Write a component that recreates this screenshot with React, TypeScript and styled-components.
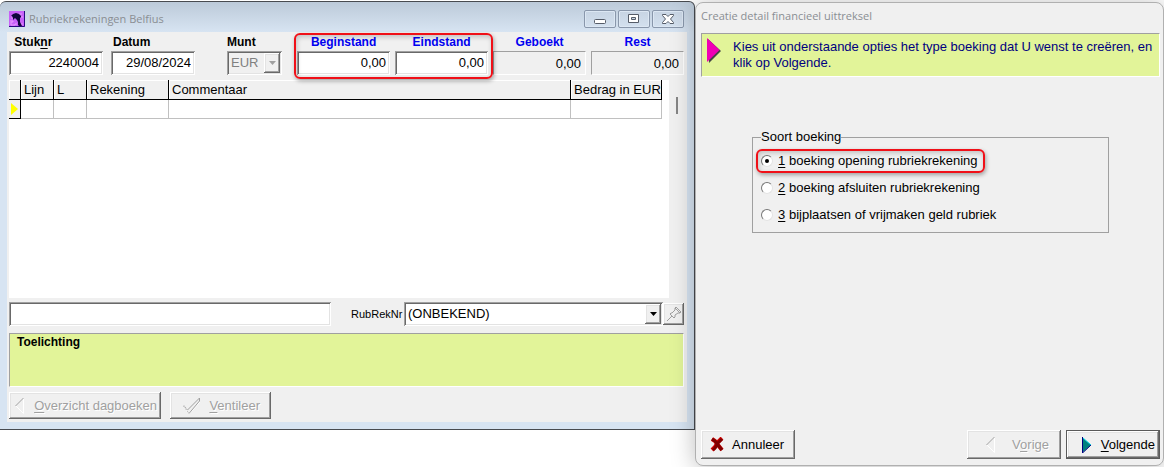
import React from "react";
import styled, { createGlobalStyle, css } from "styled-components";

const GlobalStyle = createGlobalStyle`
  *, *::before, *::after { box-sizing: border-box; }
  body {
    margin: 0;
    background: #fff;
    color: #000;
    font: 13px/16px "Liberation Sans", Arial, sans-serif;
  }
  button, input, select { font: inherit; color: inherit; margin: 0; border-radius: 0; }
  u { text-underline-offset: 2px; }
`;

const sunken = css`
  border: 0;
  box-shadow: inset 1px 1px #a0a0a0, inset -1px -1px #fff, inset 2px 2px #696969, inset -2px -2px #e3e3e3;
`;
const etched = css`
  border: 1px solid;
  border-color: #a0a0a0 #fff #fff #a0a0a0;
`;
const raised = css`
  border: 0;
  box-shadow: inset -1px -1px #696969, inset 1px 1px #fff, inset -2px -2px #a0a0a0, inset 2px 2px #e3e3e3;
`;

const Desktop = styled.main`
  display: flex;
  align-items: flex-start;
  min-height: 100vh;
  overflow: hidden;
`;

const LedgerWindow = styled.section`
  flex: 695 1 0;
  min-width: 0;
  margin-top: 1px;
  padding: 0 7px 7px;
  border: solid #484b50;
  border-width: 1px 1px 1px 0;
  border-radius: 6px 6px 0 0;
  background: #d7e4f2 linear-gradient(#bccad9, #d7e4f2) top / 100% 30px no-repeat;
`;

const TitleBar = styled.header`
  display: flex;
  align-items: center;
  gap: 4px;
  height: 30px;
  padding: 4px 3px 0 2px;
`;

const Title = styled.h1`
  flex: 1;
  margin: 0;
  color: #8a8e93;
  font: 11px/16px "Open Sans", "Noto Sans", sans-serif;
  white-space: nowrap;
`;

const WindowButtons = styled.div`
  display: flex;
  gap: 2px;
`;

const WindowButton = styled.button`
  display: grid;
  place-items: center;
  width: 32px;
  height: 18px;
  padding: 0;
  border: 1px solid #8997ab;
  border-radius: 2px;
  background: linear-gradient(#c7d4e3, #d3e0ee);
  box-shadow: inset 0 0 0 1px #dce7f3;
`;

const Client = styled.div`
  padding: 2px 3px 3px 2px;
  background: #f0f0f0;
`;

const FieldRow = styled.div`
  display: flex;
  justify-content: space-between;
`;

const FieldGroup = styled.div<{ $gap: number }>`
  position: relative;
  display: flex;
  gap: ${(p) => p.$gap}px;
`;

const Field = styled.div<{ $width: number }>`
  display: flex;
  flex-direction: column;
  gap: 1px;
  width: ${(p) => p.$width}px;
`;

const CurrencyField = styled(Field)`
  margin-left: 17px;
`;

const FieldLabel = styled.label<{ $align?: "left" | "center"; $blue?: boolean }>`
  padding: 0 ${(p) => (p.$align === "center" ? 0 : 2)}px;
  text-align: ${(p) => p.$align ?? "left"};
  color: ${(p) => (p.$blue ? "#0000f0" : "#000")};
  font-size: 12px;
  font-weight: bold;
`;

const CurrencyLabel = styled(FieldLabel)`
  padding: 0;
`;

const TextInput = styled.input<{ $flat?: boolean }>`
  width: 100%;
  height: 24px;
  padding: 0 4px 2px;
  text-align: right;
  background: #fff;
  ${sunken}
  ${(p) => p.$flat && css`
    ${etched}
    padding-bottom: 0;
    background: #f0f0f0;
    box-shadow: none;
  `}
`;

const SelectFrame = styled.div<{ $disabled?: boolean }>`
  position: relative;
  flex: 1;
  height: 24px;
  background: ${(p) => (p.$disabled ? "#f0f0f0" : "#fff")};
  ${sunken}
`;

const Select = styled.select`
  display: block;
  width: 100%;
  height: 24px;
  padding: 0 20px 0 4px;
  border: 0;
  background: transparent;
  appearance: none;
  &:disabled { color: #808080; opacity: 1; }
`;

const DropArrow = styled.span`
  position: absolute;
  top: 2px;
  right: 2px;
  display: grid;
  place-items: center;
  width: 16px;
  height: 20px;
  background: #f0f0f0;
  pointer-events: none;
  ${raised}
`;

const Highlight = styled.div`
  position: absolute;
  border: 2px solid #f01018;
  border-radius: 6px;
  box-shadow: 1px 2px 4px #0005, inset 1px 2px 5px #0003;
  pointer-events: none;
`;

const FieldHighlight = styled(Highlight)`
  inset: -1px -5px -4px -3px;
`;

const OptionHighlight = styled(Highlight)`
  inset: -4px -7px -4px -5px;
`;

const GridArea = styled.div`
  display: flex;
  margin-top: 5px;
`;

const GridPane = styled.div`
  flex: 1;
  min-height: 218px;
  padding-right: 7px;
  background: #fff;
`;

const GridScroll = styled.div`
  width: 15px;
  padding: 17px 7px 0;
  &::before {
    content: "";
    display: block;
    width: 2px;
    height: 17px;
    background: #858585;
  }
`;

const Table = styled.table`
  width: 100%;
  border-collapse: separate;
  border-spacing: 0;
  table-layout: fixed;
`;

const HeadCell = styled.th<{ $width?: number }>`
  width: ${(p) => (p.$width ? `${p.$width}px` : "auto")};
  height: 20px;
  padding: 0 0 0 3px;
  border: solid #000;
  border-width: 0 1px 1px 0;
  background: #f0f0f0;
  box-shadow: inset 1px 1px #fff;
  text-align: left;
  font-weight: normal;
  white-space: nowrap;
`;

const Cell = styled.td`
  height: 19px;
  padding: 0;
  border: solid #c0c0c0;
  border-width: 0 1px 1px 0;
`;

const MarkerCell = styled(Cell)`
  border-color: #000;
  background: #f0f0f0;
  svg { display: block; margin-left: 2px; }
`;

const AccountRow = styled.div`
  display: flex;
  align-items: center;
  margin-top: 4px;
`;

const Search = styled(TextInput)`
  flex: 314 1 0;
  min-width: 0;
  text-align: left;
`;

const AccountPicker = styled.div`
  display: flex;
  align-items: center;
  flex: 333 1 0;
  margin-left: 20px;
`;

const SmallLabel = styled.label`
  width: 53px;
  font-size: 11px;
`;

const PinButton = styled.button`
  display: grid;
  place-items: center;
  width: 21px;
  height: 22px;
  padding: 0;
  background: #f0f0f0;
  ${raised}
`;

const Notes = styled.section`
  min-height: 54px;
  margin-top: 7px;
  padding: 0 7px;
  background: #e2f499;
  ${etched}
`;

const NotesTitle = styled.h2`
  margin: 0;
  font-size: 12px;
  line-height: 16px;
`;

const Actions = styled.div<{ $gap: number }>`
  display: flex;
  gap: ${(p) => p.$gap}px;
`;

const LedgerActions = styled(Actions)`
  margin-top: 5px;
`;

const PushButton = styled.button<{ $width: number; $height: number; $default?: boolean }>`
  display: flex;
  align-items: center;
  justify-content: flex-end;
  gap: 9px;
  width: ${(p) => p.$width}px;
  height: ${(p) => p.$height}px;
  padding: 0 4px;
  background: #f0f0f0;
  white-space: nowrap;
  ${raised}
  ${(p) => p.$default && css`
    border: 1px solid #5a5a5a;
  `}
  &:disabled { color: #a0a0a0; text-shadow: 1px 1px #fff; }
`;

const LooseButton = styled(PushButton)`
  padding-right: 11px;
  gap: 8px;
`;

const WideButton = styled(LooseButton)`
  padding-right: 12px;
  gap: 16px;
`;

const DialogWindow = styled.section`
  position: relative;
  display: flex;
  flex-direction: column;
  flex: 469 1 0;
  min-width: 0;
  min-height: calc(100vh - 3px);
  margin-top: 2px;
  padding: 0 3px 6px 5px;
  border: 1px solid #b0b0b0;
  border-radius: 8px;
  background: #f0f0f0;
  box-shadow: 0 2px 24px #0004;
`;

const DialogTitle = styled(Title)`
  flex: none;
  padding: 5px 0 9px;
`;

const Banner = styled.p`
  display: flex;
  gap: 12px;
  min-height: 44px;
  margin: 0;
  padding: 4px 4px 4px 5px;
  background: #e2f499;
  color: #000080;
  ${etched}
  svg { flex: none; }
`;

const BannerText = styled.span`
  padding-top: 1px;
`;

const Options = styled.fieldset`
  position: relative;
  display: flex;
  flex-direction: column;
  align-items: flex-start;
  gap: 11px;
  margin: 52px 51px 0;
  padding: 8px 8px 9px;
  border: 1px solid #a0a0a0;
`;

const Legend = styled.legend`
  padding: 0;
`;

const Option = styled.label`
  position: relative;
  display: flex;
  align-items: center;
  gap: 5px;
`;

const Radio = styled.input`
  display: grid;
  place-items: center;
  width: 12px;
  height: 12px;
  margin: 0;
  border: 1px solid;
  border-color: #777 #e3e3e3 #e3e3e3 #777;
  border-radius: 50%;
  background: #fff;
  appearance: none;
  &:checked::before {
    content: "";
    width: 4px;
    height: 4px;
    border-radius: 50%;
    background: #000;
  }
`;

const DialogActions = styled.footer`
  display: flex;
  justify-content: space-between;
  margin-top: auto;
`;

const Dolphin = () => (
  <svg width="16" height="16" viewBox="0 0 16 16" aria-hidden="true">
    <path d="M0 0h16v16H0z" fill="#c860f8" />
    <path d="M1 10h3v1H2v3h4v-1h2M12 13h2M12 6h2M10 3h3M2 7h2" fill="none" stroke="#e898ff" />
    <path d="M0 5h2l2-2 3-1 3 1 2 2v1l-1 1v4l1 2 1 2h-3l-1-1v-3L8 9 6 7 4 9V7L3 5z" fill="#10063c" />
    <path d="M15.500 0v15.500H0" fill="none" stroke="#2a0a80" />
  </svg>
);

const ArrowDown = ({ color }: { color: string }) => (
  <svg width="7" height="4" viewBox="0 0 7 4" aria-hidden="true">
    <path d="M0 0h7L3.500 4z" fill={color} />
  </svg>
);

const BackIcon = () => (
  <svg width="10" height="18" viewBox="0 0 10 18" aria-hidden="true" fill="none">
    <path d="M8.500 1v15.500L1 9" stroke="#fff" />
    <path d="M8.500 1L.5 9" stroke="#a0a0a0" />
  </svg>
);

const DoubleCheckIcon = () => (
  <svg width="18" height="18" viewBox="0 0 18 18" aria-hidden="true" fill="none">
    <path d="M1 10l5 7L17 5" stroke="#fff" />
    <path d="M4.500 13L16.500 1v3L6 16.500" stroke="#a0a0a0" />
    <path d="M.5 9l5.500 7.500M1 8.500l3.500 4.500" stroke="#a0a0a0" strokeDasharray="1 1" />
  </svg>
);

const PinIcon = () => (
  <svg width="15" height="15" viewBox="0 0 15 15" aria-hidden="true" fill="none" stroke="#a0a0a0">
    <path d="M1 14l5-5M4 7l4 4 1-1V8l3-2h2l-5-5v2L6 6H5zM9 1l1-1 5 5-1 1" />
  </svg>
);

const CrossIcon = () => (
  <svg width="14" height="15" viewBox="0 0 14 15" aria-hidden="true" fill="none">
    <path d="M2 2l3 2 3 4 4 5M12 1L8 5l-3 5-3 3" stroke="#d00000" strokeWidth="4" />
    <path d="M2 2l3 2 3 4 4 5M12 2L8 6l-3 5-2 2" stroke="#800000" strokeWidth="3" />
  </svg>
);

const NextIcon = () => (
  <svg width="10" height="16" viewBox="0 0 10 16" aria-hidden="true">
    <path d="M0 0l9 8-9 8z" fill="#008080" />
    <path d="M.5 0v16L9 8" fill="none" stroke="#000080" />
    <path d="M1 1l8 7" stroke="#00d8e8" />
  </svg>
);

const BannerIcon = () => (
  <svg width="14" height="25" viewBox="0 0 14 25" aria-hidden="true">
    <path d="M1 1l13 12L2 25z" fill="#444" />
    <path d="M0 0l12.500 12L0 24z" fill="#f000b4" />
  </svg>
);

const amounts = [
  { id: "begin", label: "Beginstand", locked: false },
  { id: "end", label: "Eindstand", locked: false },
  { id: "booked", label: "Geboekt", locked: true },
  { id: "rest", label: "Rest", locked: true },
];

const AmountField = ({ id, label, locked }: (typeof amounts)[number]) => (
  <Field $width={93}>
    <FieldLabel htmlFor={id} $align="center" $blue>{label}</FieldLabel>
    <TextInput id={id} defaultValue="0,00" readOnly={locked} $flat={locked} />
  </Field>
);

const options = [
  { key: "1", text: "boeking opening rubriekrekening" },
  { key: "2", text: "boeking afsluiten rubriekrekening" },
  { key: "3", text: "bijplaatsen of vrijmaken geld rubriek" },
];

export default function App() {
  return (
    <>
      <GlobalStyle />
      <Desktop>
        <LedgerWindow>
          <TitleBar>
            <Dolphin />
            <Title>Rubriekrekeningen Belfius</Title>
            <WindowButtons>
              <WindowButton aria-label="Minimaliseren">
                <svg width="12" height="10" viewBox="0 0 12 10">
                  <rect x=".5" y="5.500" width="11" height="4" rx="1" fill="#fff" stroke="#555c68" />
                </svg>
              </WindowButton>
              <WindowButton aria-label="Maximaliseren">
                <svg width="12" height="10" viewBox="0 0 12 10" fill="#fff" stroke="#555c68">
                  <path d="M.5 .5h10v8H.5z" />
                  <path d="M3.500 3.500h4v2h-4z" fill="#c7d4e3" />
                </svg>
              </WindowButton>
              <WindowButton aria-label="Sluiten">
                <svg width="12" height="10" viewBox="0 0 12 10">
                  <path d="M.5 .5h3.500L6 2.500 8 .5h3.500v1L8.500 5l3 3.500v1H8L6 7.500l-2 2H.5v-1L3.500 5l-3-3.500z" fill="#fff" stroke="#555c68" />
                </svg>
              </WindowButton>
            </WindowButtons>
          </TitleBar>
          <Client>
            <FieldRow>
              <FieldGroup $gap={8}>
                <Field $width={94}>
                  <FieldLabel htmlFor="stuknr">&nbsp;Stuk<u>n</u>r</FieldLabel>
                  <TextInput id="stuknr" defaultValue="2240004" />
                </Field>
                <Field $width={84}>
                  <FieldLabel htmlFor="datum">Datum</FieldLabel>
                  <TextInput id="datum" defaultValue="29/08/2024" />
                </Field>
              </FieldGroup>
              <CurrencyField $width={55}>
                <CurrencyLabel htmlFor="munt">Munt</CurrencyLabel>
                <SelectFrame $disabled>
                  <Select id="munt" disabled><option>EUR</option></Select>
                  <DropArrow><ArrowDown color="#a0a0a0" /></DropArrow>
                </SelectFrame>
              </CurrencyField>
              <FieldGroup $gap={5}>
                <FieldGroup $gap={5}>
                  {amounts.slice(0, 2).map((a) => <AmountField key={a.id} {...a} />)}
                  <FieldHighlight />
                </FieldGroup>
                {amounts.slice(2).map((a) => <AmountField key={a.id} {...a} />)}
              </FieldGroup>
            </FieldRow>
            <GridArea>
              <GridPane>
                <Table>
                  <thead>
                    <tr>
                      <HeadCell $width={12} aria-label="Huidige lijn" />
                      <HeadCell $width={33}>Lijn</HeadCell>
                      <HeadCell $width={33}>L</HeadCell>
                      <HeadCell $width={82}>Rekening</HeadCell>
                      <HeadCell>Commentaar</HeadCell>
                      <HeadCell $width={91}>Bedrag in EUR</HeadCell>
                    </tr>
                  </thead>
                  <tbody>
                    <tr>
                      <MarkerCell>
                        <svg width="7" height="12" viewBox="0 0 7 12" aria-hidden="true"><path d="M0 0l7 6-7 6z" fill="#ff0" /></svg>
                      </MarkerCell>
                      <Cell /><Cell /><Cell /><Cell /><Cell />
                    </tr>
                  </tbody>
                </Table>
              </GridPane>
              <GridScroll />
            </GridArea>
            <AccountRow>
              <Search aria-label="Omschrijving" />
              <AccountPicker>
                <SmallLabel htmlFor="rubrek">RubRekNr</SmallLabel>
                <SelectFrame>
                  <Select id="rubrek"><option>(ONBEKEND)</option></Select>
                  <DropArrow><ArrowDown color="#000" /></DropArrow>
                </SelectFrame>
                <PinButton disabled aria-label="Vastzetten"><PinIcon /></PinButton>
              </AccountPicker>
            </AccountRow>
            <Notes><NotesTitle>Toelichting</NotesTitle></Notes>
            <LedgerActions $gap={9}>
              <PushButton $width={152} $height={27} disabled><BackIcon /><span><u>O</u>verzicht dagboeken</span></PushButton>
              <LooseButton $width={101} $height={27} disabled><DoubleCheckIcon /><span><u>V</u>entileer</span></LooseButton>
            </LedgerActions>
          </Client>
        </LedgerWindow>

        <DialogWindow>
          <DialogTitle>Creatie detail financieel uittreksel</DialogTitle>
          <Banner>
            <BannerIcon />
            <BannerText>Kies uit onderstaande opties het type boeking dat U wenst te creëren, en klik op Volgende.</BannerText>
          </Banner>
          <Options>
            <Legend>Soort boeking</Legend>
            {options.map((o, i) => (
              <Option key={o.key}>
                <Radio type="radio" name="soort" defaultChecked={i === 0} />
                <span><u>{o.key}</u> {o.text}</span>
                {i === 0 && <OptionHighlight />}
              </Option>
            ))}
          </Options>
          <DialogActions>
            <LooseButton $width={94} $height={29}><CrossIcon /><span>Annuleer</span></LooseButton>
            <Actions $gap={5}>
              <WideButton $width={94} $height={29} disabled><BackIcon /><span>V<u>o</u>rige</span></WideButton>
              <PushButton $width={94} $height={29} $default><NextIcon /><span><u>V</u>olgende</span></PushButton>
            </Actions>
          </DialogActions>
        </DialogWindow>
      </Desktop>
    </>
  );
}
